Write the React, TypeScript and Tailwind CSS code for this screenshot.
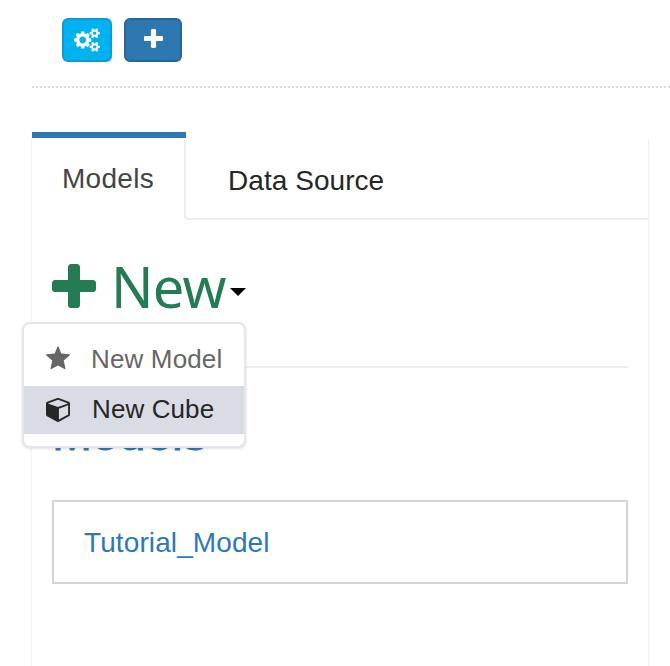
import React from "react";

const PLUS =
  "M1600 736v192q0 40-28 68t-68 28h-416v416q0 40-28 68t-68 28h-192q-40 0-68-28t-28-68v-416h-416q-40 0-68-28t-28-68v-192q0-40 28-68t68-28h416v-416q0-40 28-68t68-28h192q40 0 68 28t28 68v416h416q40 0 68 28t28 68z";
const STAR =
  "M11.4 .7Q12 -.3 12.6 .7L15.3 7.5L23.3 8.3Q24.4 8.6 23.6 9.4L17.7 14.6L19.5 22.5Q19.5 23.6 18.5 23.1L12 19.5L5.500 23.1Q4.500 23.6 4.500 22.500L6.300 14.600L.4 9.400Q-.4 8.600 .7 8.300L8.700 7.500Z";
const CUBE =
  "M896 1629l640-349v-636l-640 233v752zm-64-865l698-254-698-254-698 254zm832-252v768q0 35-18 65t-49 47l-704 384q-28 16-61 16t-61-16l-704-384q-31-17-49-47t-18-65v-768q0-40 23-73t61-47l704-256q22-8 44-8t44 8l704 256q38 14 61 47t23 73z";
const COGS =
  "M832 896q0-106-75-181t-181-75-181 75-75 181 75 181 181 75 181-75 75-181zm768 512q0-52-38-90t-90-38-90 38-38 90q0 53 37.5 90.5t90.5 37.5 90.5-37.5 37.5-90.5zm0-1024q0-52-38-90t-90-38-90 38-38 90q0 53 37.5 90.5t90.5 37.5 90.5-37.5 37.5-90.5zm-384 421v185q0 10-7 19.5t-16 10.5l-155 24q-11 35-32 76 34 48 90 115 7 11 7 20 0 12-7 19-23 30-82.5 89.5t-78.5 59.5q-11 0-21-7l-115-90q-37 19-77 31-11 108-23 155-7 24-30 24h-186q-11 0-20-7.5t-10-17.5l-23-153q-34-10-75-31l-118 89q-7 7-20 7-11 0-21-8-144-133-144-160 0-9 7-19 10-14 41-53t47-61q-23-44-35-82l-152-24q-10-1-17-9.5t-7-19.5v-185q0-10 7-19.5t16-10.5l155-24q11-35 32-76-34-48-90-115-7-11-7-20 0-12 7-20 22-30 82-89t79-59q11 0 21 7l115 90q34-18 77-32 11-108 23-154 7-24 30-24h186q11 0 20 7.5t10 17.5l23 153q34 10 75 31l118-89q8-7 20-7 11 0 21 8 144 133 144 160 0 8-7 19-12 16-42 54t-45 60q23 48 34 82l152 23q10 2 17 10.5t7 19.5zm640 533v140q0 16-149 31-12 27-30 52 51 113 51 138 0 4-4 7-122 71-124 71-8 0-46-47t-52-68q-20 2-30 2t-30-2q-14 21-52 68t-46 47q-2 0-124-71-4-3-4-7 0-25 51-138-18-25-30-52-149-15-149-31v-140q0-16 149-31 13-29 30-52-51-113-51-138 0-4 4-7 4-2 35-20t59-34 30-16q8 0 46 46.5t52 67.5q20-2 30-2t30 2q51-71 92-112l6-2q4 0 124 70 4 3 4 7 0 25-51 138 17 23 30 52 149 15 149 31zm0-1024v140q0 16-149 31-12 27-30 52 51 113 51 138 0 4-4 7-122 71-124 71-8 0-46-47t-52-68q-20 2-30 2t-30-2q-14 21-52 68t-46 47q-2 0-124-71-4-3-4-7 0-25 51-138-18-25-30-52-149-15-149-31v-140q0-16 149-31 13-29 30-52-51-113-51-138 0-4 4-7 4-2 35-20t59-34 30-16q8 0 46 46.5t52 67.5q20-2 30-2t30 2q51-71 92-112l6-2q4 0 124 70 4 3 4 7 0 25-51 138 17 23 30 52 149 15 149 31z";

function Icon({ d, box, className }: { d: string; box: string; className: string }) {
  return (
    <svg viewBox={box} className={`shrink-0 ${className}`} fill="currentColor" aria-hidden="true">
      <path d={d} />
    </svg>
  );
}

function Toolbar() {
  return (
    <header className="ml-8 flex h-[88px] items-start gap-3 bg-[repeating-linear-gradient(90deg,#dcdcdc_0_2px,transparent_2px_4px)] bg-[length:100%_2px] bg-bottom bg-no-repeat pt-[18px] pl-[30px]">
      <button className="flex h-11 w-[50px] items-center justify-center rounded-md border-2 border-[#0b9bd1] bg-[#00b3f0] text-white">
        <Icon d={COGS} box="-64 0 1920 1792" className="h-6 w-[26px]" />
      </button>
      <button className="flex h-11 w-[58px] items-start justify-center rounded-md border-2 border-[#286797] bg-[#2e78b2] pt-[9px] text-white">
        <Icon d={PLUS} box="192 128 1408 1408" className="size-[19px]" />
      </button>
    </header>
  );
}

function Tabs() {
  return (
    <nav className="flex h-[88px] text-[28px] leading-8">
      <button className="flex h-[88px] w-[154px] items-start border-t-[6px] border-[#2e79b5] pt-[25px] pl-[30px] text-left tracking-[0.3px] text-[#444]">
        Models
      </button>
      <div className="mt-[6px] -ml-[2px] flex-1 rounded-bl-[4px] border-b-2 border-l-2 border-[#eee] pt-[27px] pl-[42px] tracking-[0.05px] text-[#262626]">
        Data Source
      </div>
    </nav>
  );
}

function NewMenu() {
  return (
    <ul className="absolute top-[102px] -left-[30px] z-10 h-[126px] w-56 rounded-lg border-2 border-[#e6e6e6] bg-white pt-3 text-[26px] leading-[50px] shadow-[0_1px_3px_rgba(0,0,0,0.12)]">
      <li className="flex h-[50px] items-center pl-[22px] text-[#666]">
        <Icon d={STAR} box="0 0 24 24" className="mt-[-6px] size-6" />
        <span className="mt-[-5px] ml-[21px] tracking-[0.15px]">New Model</span>
      </li>
      <li className="flex h-12 items-center bg-[#d9dce4] pl-[22px] text-[#262626]">
        <Icon d={CUBE} box="0 0 1664 1792" className="mt-[-3px] h-[26px] w-6" />
        <span className="mt-[-2px] ml-[22px] tracking-[0.1px]">New Cube</span>
      </li>
    </ul>
  );
}

export default function App() {
  return (
    <div className="flex h-[666px] w-[670px] flex-col overflow-hidden bg-white font-['Liberation_Sans',Arial,sans-serif]">
      <Toolbar />
      <main className="mt-11 ml-8 flex h-[534px] w-[616px] flex-col shadow-[1px_8px_1px_#f1f1f1,-1px_6px_0_#f3f3f3]">
        <Tabs />
        <section className="relative mx-5 h-[280px] w-[576px]">
          <div className="flex h-[146px] items-start text-[#257b53]">
            <Icon d={PLUS} box="192 128 1408 1408" className="mt-11 size-11" />
            <span className="mt-[31px] ml-[15px] font-['Noto_Sans',sans-serif] text-[56px] leading-[70px] tracking-[-0.8px]">New</span>
            <span className="mt-[68px] ml-1 border-x-8 border-t-8 border-x-transparent border-t-black" />
          </div>
          <hr className="border-t-2 border-[#eee]" />
          <h2 className="pt-9 text-[48px] leading-[60px] font-medium text-[#2e79b5] [-webkit-text-stroke:0.9px_#2e79b5]">Models</h2>
          <NewMenu />
        </section>
        <a className="mx-5 flex h-[84px] w-[576px] items-center border-2 border-[#d4d4d4] pt-[2px] pl-[30px] text-[28px] tracking-[0.1px] text-[#2e79b5]">
          Tutorial_Model
        </a>
      </main>
    </div>
  );
}
